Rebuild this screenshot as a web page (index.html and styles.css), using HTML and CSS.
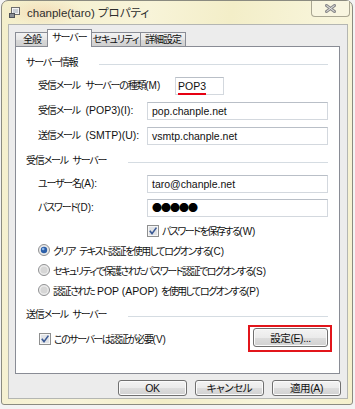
FILE: index.html
```html
<!DOCTYPE html>
<html lang="ja">
<head>
    <meta charset="UTF-8">
    <meta name="viewport" content="width=device-width, initial-scale=1.0">
    <title>chanple(taro) プロパティ</title>
    <link rel="stylesheet" href="styles.css">
</head>
<body>

    <div class="window">
        <div class="titlebar">
            <svg class="app-icon" width="11" height="11" viewBox="0 0 11 11">
                <rect x="2.5" y="0.5" width="8" height="7" fill="#f4f4f4" stroke="#6d6d6d"/>
                <rect x="4" y="2" width="5" height="4" fill="#c9ced4"/>
                <rect x="0.5" y="6.5" width="5" height="4" fill="#8a8f96" stroke="#4f5359"/>
            </svg>
            <span class="title">chanple(taro) プロパティ</span>
            <div class="close-btn">
                <svg width="11" height="9" viewBox="0 0 11 9">
                    <path d="M1.5 1.5 L9.5 7.5 M9.5 1.5 L1.5 7.5" stroke="#8c8c8c" stroke-width="3" stroke-linecap="square"/>
                    <path d="M1.5 1.5 L9.5 7.5 M9.5 1.5 L1.5 7.5" stroke="#e9e9e9" stroke-width="1"/>
                </svg>
            </div>
        </div>

        <div class="client">
            <div class="tabs">
                <div class="tab tab-general">全般</div>
                <div class="tab tab-server active">サーバー</div>
                <div class="tab tab-security">セキュリティ</div>
                <div class="tab tab-advanced">詳細設定</div>
            </div>

            <div class="panel">
                <div class="group-title"><span>サーバー情報</span><i class="rule"></i></div>
                <div class="form-rows">
                    <label>受信メール サーバーの種類<span class="key">(M)</span></label>
                    <div class="field field-short"><span class="marked">POP3</span></div>
                    <label>受信メール <span class="latin">(POP3)(I):</span></label>
                    <div class="field">pop.chanple.net</div>
                    <label>送信メール <span class="latin">(SMTP)(U):</span></label>
                    <div class="field">vsmtp.chanple.net</div>
                </div>

                <div class="group-title second"><span>受信メール サーバー</span><i class="rule"></i></div>
                <div class="form-rows">
                    <label>ユーザー名<span class="key">(A):</span></label>
                    <div class="field">taro@chanple.net</div>
                    <label>パスワード<span class="key">(D):</span></label>
                    <div class="field password">●●●●●</div>
                </div>

                <div class="option save-pass">
                    <svg class="checkbox" width="12" height="12" viewBox="0 0 12 12">
                        <rect x="0.5" y="0.5" width="11" height="11" fill="#f6f6f6" stroke="#8e8f8f"/>
                        <rect x="2" y="2" width="8" height="8" fill="#e1e3e6"/>
                        <path d="M2.8 5.8 L5 8.6 L9.4 2.6" fill="none" stroke="#3b5a95" stroke-width="1.6"/>
                    </svg>
                    <span class="opt-text">パスワードを保存する<span class="key">(W)</span></span>
                </div>

                <div class="radios">
                    <div class="option">
                        <svg class="radio" width="12" height="12" viewBox="0 0 12 12">
                            <circle cx="6" cy="6" r="5.5" fill="#e9e9e9" stroke="#8f9092"/>
                            <circle cx="6" cy="6" r="3.2" fill="#2c5fa8"/>
                            <circle cx="5.2" cy="5" r="1.3" fill="#8fb8ea"/>
                        </svg>
                        <span class="opt-text">クリア テキスト認証を使用してログオンする<span class="key">(C)</span></span>
                    </div>
                    <div class="option">
                        <svg class="radio" width="12" height="12" viewBox="0 0 12 12">
                            <circle cx="6" cy="6" r="5.5" fill="#ececec" stroke="#8f9092"/>
                            <circle cx="6" cy="6" r="3.5" fill="#d6d6d6"/>
                        </svg>
                        <span class="opt-text">セキュリティで保護されたパスワード認証でログオンする<span class="key">(S)</span></span>
                    </div>
                    <div class="option">
                        <svg class="radio" width="12" height="12" viewBox="0 0 12 12">
                            <circle cx="6" cy="6" r="5.5" fill="#ececec" stroke="#8f9092"/>
                            <circle cx="6" cy="6" r="3.5" fill="#d6d6d6"/>
                        </svg>
                        <span class="opt-text">認証された<span class="latin"> POP (APOP) </span>を使用してログオンする<span class="key">(P)</span></span>
                    </div>
                </div>

                <div class="group-title third"><span>送信メール サーバー</span><i class="rule"></i></div>
                <div class="smtp-row">
                    <div class="option">
                        <svg class="checkbox" width="12" height="12" viewBox="0 0 12 12">
                            <rect x="0.5" y="0.5" width="11" height="11" fill="#f6f6f6" stroke="#8e8f8f"/>
                            <rect x="2" y="2" width="8" height="8" fill="#e1e3e6"/>
                            <path d="M2.8 5.8 L5 8.6 L9.4 2.6" fill="none" stroke="#3b5a95" stroke-width="1.6"/>
                        </svg>
                        <span class="opt-text">このサーバーは認証が必要<span class="key">(V)</span></span>
                    </div>
                    <div class="highlight">
                        <button class="btn settings-btn">設定(E)...</button>
                    </div>
                </div>
            </div>

            <div class="dialog-buttons">
                <button class="btn">OK</button>
                <button class="btn">キャンセル</button>
                <button class="btn">適用(A)</button>
            </div>
        </div>
    </div>

</body>
</html>
```

FILE: styles.css
```css
* {
    box-sizing: border-box;
}

body {
    margin: 0;
    background-color: #f3f3f3;
    font-family: "Liberation Sans", "Noto Sans CJK JP", sans-serif;
    font-size: 10.5px;
    font-feature-settings: "palt" 1;
    color: #111;
}

.window {
    width: 352px;
    height: 405px;
    margin-left: 1px;
    border: 1px solid #8b8b80;
    border-radius: 7px 7px 3px 3px;
    background:
        radial-gradient(ellipse 40px 14px at 42px 11px, rgba(240, 200, 160, 0.45), rgba(240, 200, 160, 0)),
        linear-gradient(100deg, #f4efcb 0%, #f8f4d9 35%, #f3eec8 55%, #f8f5dc 80%, #f5f0cc 100%);
    display: flex;
    flex-direction: column;
}

.titlebar {
    height: 23px;
    display: flex;
    align-items: flex-start;
    padding-left: 7px;
}

.app-icon {
    margin-top: 6px;
}

.title {
    margin-left: 7px;
    margin-top: 4px;
    font-size: 11.5px;
    line-height: 16px;
    color: #2e2e2e;
    white-space: nowrap;
}

.close-btn {
    margin-left: auto;
    margin-right: 2px;
    width: 39px;
    height: 16px;
    border: 1px solid #a9a692;
    border-top: none;
    border-radius: 0 0 4px 4px;
    background-color: #f8f5e0;
    display: flex;
    align-items: center;
    justify-content: center;
}

.client {
    margin-left: 6px;
    width: 340px;
    height: 375px;
    border: 1px solid #b4b6b2;
    background-color: #ececec;
    padding: 4px 7px 2px 6px;
    display: flex;
    flex-direction: column;
}

/* tabs */
.tabs {
    display: flex;
    align-items: flex-end;
    height: 17px;
}

.tab {
    height: 14px;
    border: 1px solid #898c95;
    border-bottom: none;
    margin-right: -1px;
    background: linear-gradient(#f2f2f2, #e6e6e6 50%, #d9d9d9 51%, #d0d0d0);
    text-align: center;
    font-size: 10px;
    line-height: 13px;
    letter-spacing: -1px;
    white-space: nowrap;
    color: #111;
}

.tab-general { width: 34px; }
.tab-server { width: 45px; }
.tab-security { width: 51px; }
.tab-advanced { width: 46px; }

.tab.active {
    height: 18px;
    margin-bottom: -1px;
    margin-left: -1px;
    margin-right: -2px;
    position: relative;
    z-index: 1;
    background: #fff;
    line-height: 16px;
}

.panel {
    height: 328px;
    border: 1px solid #898c95;
    background-color: #fff;
    padding: 9px 11px 0 10px;
}

/* latin runs and access keys keep their natural spacing */
.latin {
    font-size: 10.5px;
    letter-spacing: 0;
    word-spacing: 0;
}

.key {
    letter-spacing: 0;
}

.group-title {
    display: flex;
    align-items: center;
    height: 14px;
    line-height: 14px;
    font-size: 10px;
    letter-spacing: -1.2px;
    word-spacing: 3px;
    white-space: nowrap;
}

.group-title .rule {
    flex: 1;
    height: 1px;
    margin-left: 22px;
    margin-top: 3px;
    background-color: #d5dce2;
}

.group-title.second {
    margin-top: 9px;
}

.group-title.third {
    margin-top: 11px;
}

.form-rows {
    display: grid;
    grid-template-columns: 109px 1fr;
    row-gap: 6px;
    margin-top: 7px;
    padding-left: 12px;
    align-items: center;
}

.form-rows label {
    font-size: 10px;
    line-height: 18px;
    letter-spacing: -1.2px;
    word-spacing: 4px;
    white-space: nowrap;
}

.field {
    height: 18px;
    border: 1px solid #d3d8de;
    border-top-color: #b9bfc7;
    padding-left: 4px;
    line-height: 16px;
}

.field-short {
    width: 49px;
    margin-left: 28px;
    padding-left: 2px;
}

.marked {
    border-bottom: 2px solid #e60012;
    display: inline-block;
    line-height: 13px;
}

.password {
    font-family: "Noto Sans CJK JP", sans-serif;
    font-size: 10px;
    letter-spacing: -1px;
    color: #000;
}

.option {
    display: flex;
    align-items: center;
    height: 13px;
    white-space: nowrap;
}

.opt-text {
    margin-left: 3px;
    font-size: 10px;
    letter-spacing: -1.5px;
    word-spacing: 3px;
}

.save-pass {
    margin-top: 7px;
    margin-left: 121px;
}

.radios {
    margin-top: 6px;
    padding-left: 12px;
    display: flex;
    flex-direction: column;
    gap: 6px;
}

.radios .option {
    height: 14px;
}

.smtp-row {
    margin-top: 3px;
    padding-left: 13px;
    display: flex;
    align-items: center;
    justify-content: space-between;
    margin-right: -4px;
}

.highlight {
    border: 2px solid #e2151b;
    padding: 1px 2px 3px 3px;
}

.btn {
    font-family: inherit;
    font-size: 10.5px;
    font-feature-settings: "palt" 1;
    letter-spacing: -0.4px;
    color: #111;
    border: 1px solid #707070;
    border-radius: 3px;
    background: linear-gradient(#f3f3f3, #ebebeb 50%, #dddddd 51%, #d1d1d1);
    padding: 0;
    box-shadow: inset 0 0 0 1px #fbfbfb;
}

.settings-btn {
    width: 75px;
    height: 19px;
    display: block;
}

.dialog-buttons {
    margin-top: 6px;
    display: flex;
    justify-content: flex-end;
    gap: 8px;
    margin-right: -1px;
}

.dialog-buttons .btn {
    width: 69px;
    height: 16px;
    line-height: 14px;
}
```
